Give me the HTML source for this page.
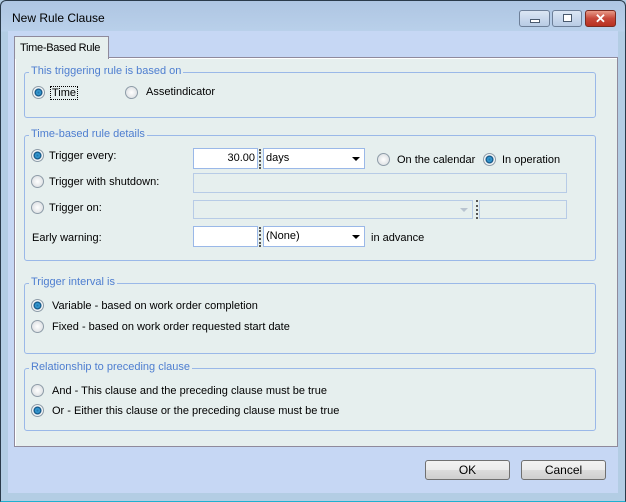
<!DOCTYPE html>
<html><head><style>
*{margin:0;padding:0;box-sizing:border-box}
body{width:626px;height:502px;overflow:hidden;background:#b3cde4;font-family:"Liberation Sans",sans-serif;font-size:11px;color:#000;position:relative}
.a{position:absolute}
#frame{left:0;top:0;width:626px;height:502px;border:1px solid #2a3a4a;border-bottom-color:#1fb0d0;border-radius:6px 6px 0 0;background:linear-gradient(#aec5e2,#b9d0ea 30px,#b3cde4 31px)}
#client{left:8px;top:31px;width:610px;height:462px;background:#c6d7f4}
#panel{left:14px;top:57px;width:604px;height:390px;background:#e6efee;border:1px solid #8f8a9c;box-shadow:inset 1px 1px 0 #fff}
#tab{left:14px;top:36px;width:95px;height:23px;background:#e6efee;border:1px solid #8f8a9c;border-bottom:none;padding:5px 0 0 5px;letter-spacing:-0.3px;white-space:nowrap}
.g{border:1px solid #9ab8e8;border-radius:3px}
.gl{background:#e6efee;color:#4e7ed0;padding:0 2px}
.r{width:13px;height:13px;border-radius:50%;border:1px solid #8e9ca8;background:radial-gradient(#fff,#d4d8dc)}
.r.on{background:radial-gradient(#1d6ea6 0,#3aa0d8 2px,#0a4a7a 3.5px,#fff 4.5px,#dfe3e6 6px)}
.tb{background:#fff;border:1px solid #9ab8e8}
.dis{background:#e6efee;border:1px solid #b7cbe6}
.arr{width:0;height:0;border-left:4px solid transparent;border-right:4px solid transparent;border-top:4px solid #000}
.btn{border:1px solid #707070;border-radius:3px;background:linear-gradient(#f2f2f2,#ebebeb 50%,#dcdcdc 51%,#cfcfcf);text-align:center;line-height:18px;font-size:12px}
.dots{width:1px;height:20px;border-left:2px dotted #555}
</style></head><body>
<div class="a" id="frame"></div>
<div class="a" style="left:12px;top:11px;font-size:12px">New Rule Clause</div>
<div class="a" style="left:519px;top:10px;width:31px;height:17px;border:1px solid #6d7f98;border-radius:3px;background:linear-gradient(#dbe6f4,#b8cbe4)"><div class="a" style="left:10px;top:8px;width:10px;height:4px;border:1px solid #4a5a6e;background:#fff"></div></div>
<div class="a" style="left:552px;top:10px;width:30px;height:17px;border:1px solid #6d7f98;border-radius:3px;background:linear-gradient(#dbe6f4,#b8cbe4)"><div class="a" style="left:10px;top:3px;width:9px;height:8px;border:1px solid #4a5a6e;background:#fff"></div></div>
<div class="a" style="left:585px;top:10px;width:31px;height:17px;border:1px solid #7a2a20;border-radius:3px;background:linear-gradient(#e89a88,#c7483a 50%,#b83020);color:#fff;font-weight:bold;font-size:13px;text-align:center;line-height:15px">✕</div>
<div class="a" id="client"></div>
<div class="a" id="panel"></div>
<div class="a" id="tab">Time-Based Rule</div>

<div class="a g" style="left:24px;top:72px;width:572px;height:46px"></div>
<div class="a gl" style="left:29px;top:65px">This triggering rule is based on</div>
<div class="a r on" style="left:32px;top:86px"></div>
<div class="a" style="left:50px;top:86px;border:1px dotted #000;padding:0 1px">Time</div>
<div class="a r" style="left:125px;top:86px"></div>
<div class="a" style="left:146px;top:86px">Assetindicator</div>

<div class="a g" style="left:24px;top:135px;width:572px;height:126px"></div>
<div class="a gl" style="left:29px;top:128px">Time-based rule details</div>
<div class="a r on" style="left:31px;top:149px"></div>
<div class="a" style="left:49px;top:150px">Trigger every:</div>
<div class="a tb" style="left:193px;top:148px;width:65px;height:21px;text-align:right;padding:3px 2px 0 0">30.00</div>
<div class="a dots" style="left:259px;top:149px"></div>
<div class="a tb" style="left:263px;top:148px;width:102px;height:21px;padding:3px 0 0 2px">days</div>
<div class="a arr" style="left:352px;top:157px"></div>
<div class="a r" style="left:377px;top:153px"></div>
<div class="a" style="left:397px;top:154px">On the calendar</div>
<div class="a r on" style="left:483px;top:153px"></div>
<div class="a" style="left:502px;top:154px">In operation</div>

<div class="a r" style="left:31px;top:175px"></div>
<div class="a" style="left:49px;top:176px">Trigger with shutdown:</div>
<div class="a dis" style="left:193px;top:173px;width:374px;height:20px"></div>

<div class="a r" style="left:31px;top:201px"></div>
<div class="a" style="left:49px;top:202px">Trigger on:</div>
<div class="a dis" style="left:193px;top:200px;width:280px;height:19px"></div>
<div class="a arr" style="left:460px;top:208px;border-top-color:#b8c4d0"></div>
<div class="a dots" style="left:476px;top:200px;height:19px"></div>
<div class="a dis" style="left:479px;top:200px;width:88px;height:19px"></div>

<div class="a" style="left:32px;top:232px">Early warning:</div>
<div class="a tb" style="left:193px;top:226px;width:65px;height:21px"></div>
<div class="a dots" style="left:259px;top:227px"></div>
<div class="a tb" style="left:263px;top:226px;width:102px;height:21px;padding:3px 0 0 2px">(None)</div>
<div class="a arr" style="left:352px;top:235px"></div>
<div class="a" style="left:371px;top:232px">in advance</div>

<div class="a g" style="left:24px;top:283px;width:572px;height:71px"></div>
<div class="a gl" style="left:29px;top:276px">Trigger interval is</div>
<div class="a r on" style="left:31px;top:299px"></div>
<div class="a" style="left:52px;top:300px">Variable - based on work order completion</div>
<div class="a r" style="left:31px;top:320px"></div>
<div class="a" style="left:52px;top:321px">Fixed - based on work order requested start date</div>

<div class="a g" style="left:24px;top:368px;width:572px;height:63px"></div>
<div class="a gl" style="left:29px;top:361px">Relationship to preceding clause</div>
<div class="a r" style="left:31px;top:384px"></div>
<div class="a" style="left:52px;top:385px">And - This clause and the preceding clause must be true</div>
<div class="a r on" style="left:31px;top:404px"></div>
<div class="a" style="left:52px;top:405px">Or - Either this clause or the preceding clause must be true</div>

<div class="a btn" style="left:425px;top:460px;width:85px;height:20px">OK</div>
<div class="a btn" style="left:521px;top:460px;width:85px;height:20px">Cancel</div>
</body></html>
